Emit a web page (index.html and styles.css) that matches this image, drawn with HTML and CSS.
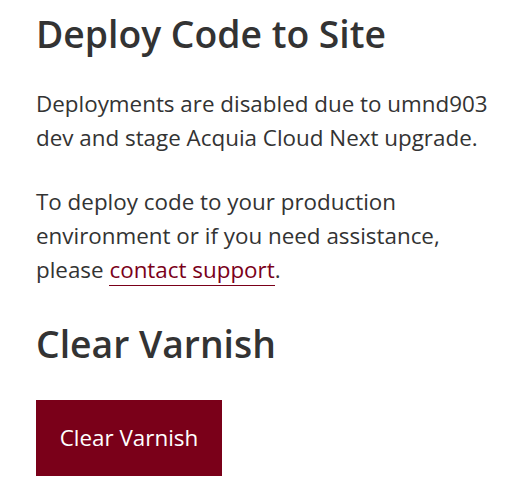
FILE: index.html
```html
<!DOCTYPE html>
<html>
<head>
<meta charset="utf-8">
<link rel="stylesheet" href="styles.css">
</head>
<body>
<main class="page">
  <h2 class="title">Deploy Code to Site</h2>
  <p class="text">Deployments are disabled due to umnd903 dev and stage Acquia Cloud Next upgrade.</p>
  <p class="text">To deploy code to your production environment or if you need assistance, please <a class="link" href="#">contact support</a>.</p>
  <h2 class="title title-second">Clear Varnish</h2>
  <button class="btn" type="button">Clear Varnish</button>
</main>
</body>
</html>
```
FILE: styles.css
```css
html, body {
  margin: 0;
  padding: 0;
  background: #fff;
}
.page {
  padding: 12px 16px 0 36px;
  font-family: "Open Sans", sans-serif;
  color: #333;
}
.title {
  font-size: 37.3px;
  font-weight: 600;
  line-height: 44.8px;
  margin: 0 0 30px;
}
.title-second {
  margin-top: 35px;
  margin-bottom: 33px;
}
.text {
  font-size: 22.4px;
  line-height: 34px;
  margin: 0 0 30px;
}
.link {
  color: #7a0019;
  text-decoration: none;
  border-bottom: 1px solid #7a0019;
}
.btn {
  display: block;
  background: #7a0019;
  color: #fff;
  border: none;
  font-family: "Open Sans", sans-serif;
  font-size: 22.4px;
  padding: 0;
  height: 76px;
  width: 186px;
  margin: 0;
}
```
